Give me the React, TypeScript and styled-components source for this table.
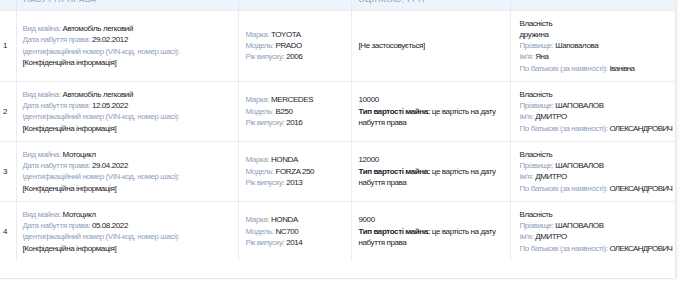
import React, {FunctionComponent} from 'react';
import styled, {createGlobalStyle} from 'styled-components';

const GlobalStl = createGlobalStyle`
    html, body {
        margin: 0;
        padding: 0;
        background: #ffffff;
        overflow: hidden;
    }
    body {
        font-family: "Liberation Sans", Arial, sans-serif;
        color: #1d2229;
    }
`;

const Viewport = styled.div`
    width: 680px;
    height: 282px;
    overflow: hidden;
`;

const TableWrapStl = styled.div`
    width: 675px;
    margin-top: -21px;
    padding-bottom: 17px;
    border-right: 1px solid #e3e8ee;
    border-bottom: 1px solid #e6eaef;
    box-shadow: 2px 0 3px rgba(0, 0, 0, 0.06);
`;

const TableStl = styled.table`
    width: 100%;
    border-collapse: collapse;
    table-layout: fixed;
    font-size: 8px;
    line-height: 11.25px;
    letter-spacing: -0.4px;
`;

const HeadCell = styled.th`
    background: #eef4fb;
    color: #8a97a6;
    font-weight: 400;
    text-transform: uppercase;
    letter-spacing: 0.6px;
    text-align: left;
    vertical-align: middle;
    padding: 4px 7px 4px;
    border-left: 1px solid #e4eaf1;
    &:first-child {
        border-left: none;
    }
`;

const Cell = styled.td<{ $pad?: number }>`
    padding: 7px 4px 7px ${p => p.$pad ?? 7}px;
    vertical-align: middle;
    border-left: 1px solid #e9edf1;
    border-top: 1px solid #e9edf1;
    &:first-child {
        border-left: none;
    }
`;

const Line = styled.div`
    white-space: nowrap;
`;

const Label = styled.span`
    color: #8fa2bb;
`;

const Value = styled.span<{ $tight?: boolean }>`
    color: #1d2229;
    letter-spacing: ${p => (p.$tight ? '-0.65px' : 'inherit')};
`;

const Strong = styled.b`
    font-weight: 700;
`;

type Row = {
    kind: string;
    date: string;
    brand: string;
    model: string;
    year: string;
    price?: string;
    relation?: string;
    surname: string;
    name: string;
    patronymic: string;
};

const ROWS: Row[] = [
    {kind: 'Автомобіль легковий', date: '29.02.2012', brand: 'TOYOTA', model: 'PRADO', year: '2006',
        relation: 'дружина', surname: 'Шаповалова', name: 'Яна', patronymic: 'Іванівна'},
    {kind: 'Автомобіль легковий', date: '12.05.2022', brand: 'MERCEDES', model: 'B250', year: '2016',
        price: '10000', surname: 'ШАПОВАЛОВ', name: 'ДМИТРО', patronymic: 'ОЛЕКСАНДРОВИЧ'},
    {kind: 'Мотоцикл', date: '29.04.2022', brand: 'HONDA', model: 'FORZA 250', year: '2013',
        price: '12000', surname: 'ШАПОВАЛОВ', name: 'ДМИТРО', patronymic: 'ОЛЕКСАНДРОВИЧ'},
    {kind: 'Мотоцикл', date: '05.08.2022', brand: 'HONDA', model: 'NC700', year: '2014',
        price: '9000', surname: 'ШАПОВАЛОВ', name: 'ДМИТРО', patronymic: 'ОЛЕКСАНДРОВИЧ'},
];

const App: FunctionComponent<{}> = () => {
    return (
        <Viewport>
            <GlobalStl/>
            <TableWrapStl>
                <TableStl>
                    <colgroup>
                        <col style={{width: 16}}/>
                        <col style={{width: 222}}/>
                        <col style={{width: 113}}/>
                        <col style={{width: 159}}/>
                        <col/>
                    </colgroup>
                    <thead>
                    <tr>
                        <HeadCell>№</HeadCell>
                        <HeadCell>Вид майна, дата<br/>набуття права</HeadCell>
                        <HeadCell>Опис</HeadCell>
                        <HeadCell>Вартість за останньою<br/>оцінкою, грн</HeadCell>
                        <HeadCell>Права</HeadCell>
                    </tr>
                    </thead>
                    <tbody>
                    {ROWS.map((r, i) => (
                        <tr key={i}>
                            <Cell $pad={3}>{i + 1}</Cell>
                            <Cell $pad={6}>
                                <Line><Label>Вид майна: </Label><Value>{r.kind}</Value></Line>
                                <Line><Label>Дата набуття права: </Label><Value>{r.date}</Value></Line>
                                <Line><Label>Ідентифікаційний номер (VIN-код, номер шасі):</Label></Line>
                                <Line><Value>[Конфіденційна інформація]</Value></Line>
                            </Cell>
                            <Cell>
                                <Line><Label>Марка: </Label><Value>{r.brand}</Value></Line>
                                <Line><Label>Модель: </Label><Value>{r.model}</Value></Line>
                                <Line><Label>Рік випуску: </Label><Value>{r.year}</Value></Line>
                            </Cell>
                            <Cell>
                                {r.price ? (
                                    <>
                                        <Line>{r.price}</Line>
                                        <div><Strong>Тип вартості майна:</Strong> це вартість на дату набуття права</div>
                                    </>
                                ) : (
                                    <Line>[Не застосовується]</Line>
                                )}
                            </Cell>
                            <Cell $pad={9}>
                                <Line>Власність</Line>
                                {r.relation && <Line>{r.relation}</Line>}
                                <Line><Label>Прізвище: </Label><Value>{r.surname}</Value></Line>
                                <Line><Label>Ім'я: </Label><Value>{r.name}</Value></Line>
                                <Line><Label>По батькові (за наявності): </Label><Value $tight>{r.patronymic}</Value></Line>
                            </Cell>
                        </tr>
                    ))}
                    </tbody>
                </TableStl>
            </TableWrapStl>
        </Viewport>
    );
};

export default App;
